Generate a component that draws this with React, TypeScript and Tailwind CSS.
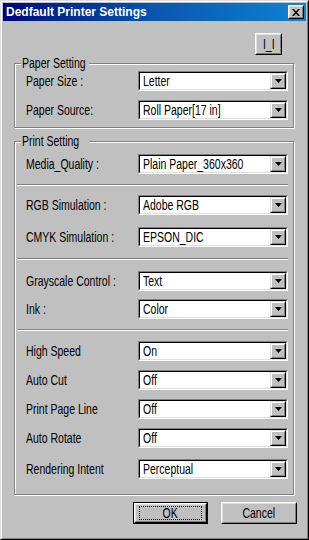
import React from "react";

const font = "font-['Liberation_Sans',Arial,sans-serif]";

// the dialog's bitmap font is tall and narrow; squeeze Liberation Sans to match
function T({ children, center = false }: { children: React.ReactNode; center?: boolean }) {
  return (
    <span
      className={`inline-block whitespace-nowrap text-[14px] leading-[16px] text-black scale-x-[0.75] ${
        center ? "origin-center" : "origin-left"
      }`}
    >
      {children}
    </span>
  );
}

function Raised({ className = "", children }: { className?: string; children?: React.ReactNode }) {
  return (
    <div className={`border border-t-white border-l-white border-b-black border-r-black bg-[#c0c0c0] ${className}`}>
      <div className="flex h-full w-full items-center justify-center border border-t-[#dfdfdf] border-l-[#dfdfdf] border-b-[#808080] border-r-[#808080]">
        {children}
      </div>
    </div>
  );
}

function Select({ value }: { value: string }) {
  return (
    <div className="h-[20px] w-[150px] shrink-0 border border-t-[#808080] border-l-[#808080] border-b-white border-r-white">
      <div className="flex h-full border border-t-black border-l-black border-b-[#dfdfdf] border-r-[#dfdfdf] bg-white">
        <div className="flex min-w-0 flex-1 items-center overflow-hidden pl-[3px]">
          <T>{value}</T>
        </div>
        <div className="h-[16px] w-[16px] shrink-0 border border-t-[#dfdfdf] border-l-[#dfdfdf] border-b-black border-r-black bg-[#c0c0c0]">
          <div className="flex h-full w-full items-center justify-center border border-t-white border-l-white border-b-[#808080] border-r-[#808080]">
            <svg width="7" height="4" viewBox="0 0 7 4">
              <path d="M0 0h7L3.5 4z" fill="#000" />
            </svg>
          </div>
        </div>
      </div>
    </div>
  );
}

function Row({ label, value, mt }: { label: string; value: string; mt: string }) {
  return (
    <div className={`flex items-center pl-[11px] pr-[5px] ${mt}`}>
      <div className="flex min-w-0 flex-1 items-center">
        <T>{label}</T>
      </div>
      <Select value={value} />
    </div>
  );
}

function Separator({ mt }: { mt: string }) {
  return <div className={`ml-[2px] mr-[5px] h-[2px] border-t border-t-[#808080] border-b border-b-white ${mt}`} />;
}

function Group({ title, className = "", children }: { title: string; className?: string; children: React.ReactNode }) {
  return (
    <div
      className={`relative ml-[11px] w-[280px] border border-[#808080] shadow-[inset_1px_1px_0_#fff,1px_1px_0_#fff] ${className}`}
    >
      <div className="absolute -top-[9px] left-[6px] flex h-[16px] w-[68px] items-center bg-[#c0c0c0] px-[1px]">
        <T>{title}</T>
      </div>
      {children}
    </div>
  );
}

export default function App() {
  return (
    <div className={`h-[540px] w-[309px] bg-[#c0c0c0] ${font}`}>
      <div className="h-full border border-t-[#dfdfdf] border-l-[#dfdfdf] border-b-black border-r-black">
        <div className="flex h-full flex-col border border-t-white border-l-white border-b-[#808080] border-r-[#808080] p-px">
          <div className="flex h-[18px] items-center justify-between bg-gradient-to-r from-[#000080] via-[#0c55b0] to-[#1084d0] pl-[3px] pr-[2px]">
            <span className="text-[12px] font-bold leading-[16px] text-white">Dedfault Printer Settings</span>
            <Raised className="h-[14px] w-[16px]">
              <svg width="8" height="7" viewBox="0 0 8 7">
                <path d="M0 0h2l2 2.5L6 0h2L5 3.5 8 7H6L4 4.5 2 7H0l3-3.5z" fill="#000" />
              </svg>
            </Raised>
          </div>

          <div className="flex flex-col">
            <Raised className="mr-[24px] mt-[12px] h-[22px] w-[27px] self-end">
              <T center>I_I</T>
            </Raised>

            <Group title="Paper Setting" className="mt-[8px] pb-[7px]">
              <Row label="Paper Size :" value="Letter" mt="mt-[7px]" />
              <Row label="Paper Source:" value="Roll Paper[17 in]" mt="mt-[9px]" />
            </Group>

            <Group title="Print Setting" className="mt-[13px] pb-[15px]">
              <Row label="Media_Quality :" value="Plain Paper_360x360" mt="mt-[12px]" />
              <Separator mt="mt-[10px]" />
              <Row label="RGB Simulation :" value="Adobe RGB" mt="mt-[9px]" />
              <Row label="CMYK Simulation :" value="EPSON_DIC" mt="mt-[12px]" />
              <Separator mt="mt-[11px]" />
              <Row label="Grayscale Control :" value="Text" mt="mt-[11px]" />
              <Row label="Ink :" value="Color" mt="mt-[8px]" />
              <Separator mt="mt-[10px]" />
              <Row label="High Speed" value="On" mt="mt-[10px]" />
              <Row label="Auto Cut" value="Off" mt="mt-[9px]" />
              <Row label="Print Page Line" value="Off" mt="mt-[9px]" />
              <Row label="Auto Rotate" value="Off" mt="mt-[9px]" />
              <Row label="Rendering Intent" value="Perceptual" mt="mt-[11px]" />
            </Group>

            <div className="mt-[7px] flex justify-end gap-[13px] pr-[9px]">
              <div className="h-[22px] w-[75px] border border-black">
                <Raised className="h-full w-full">
                  <div className="flex h-[14px] w-[63px] items-center justify-center border border-dotted border-black">
                    <T center>OK</T>
                  </div>
                </Raised>
              </div>
              <Raised className="h-[22px] w-[76px]">
                <T center>Cancel</T>
              </Raised>
            </div>
          </div>
        </div>
      </div>
    </div>
  );
}
